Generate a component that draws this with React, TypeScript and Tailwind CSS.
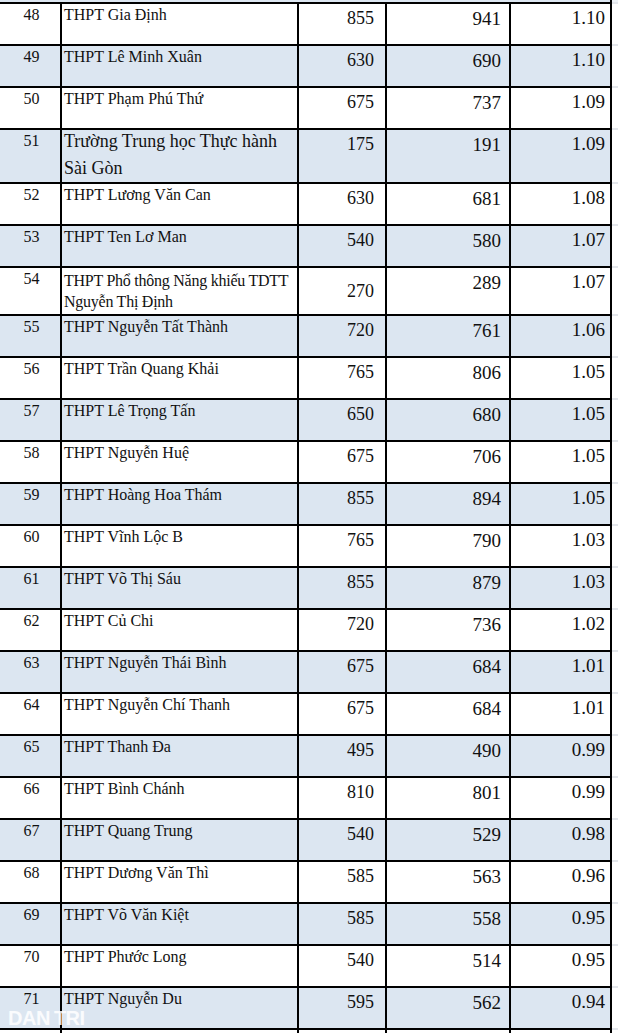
import React from "react";

type Row = {
  n: number;
  name: string;
  a: string;
  b: string;
  r: string;
  kind?: "tall" | "double";
};

const ROWS: Row[] = [
  { n: 48, name: "THPT Gia Định", a: "855", b: "941", r: "1.10" },
  { n: 49, name: "THPT Lê Minh Xuân", a: "630", b: "690", r: "1.10" },
  { n: 50, name: "THPT Phạm Phú Thứ", a: "675", b: "737", r: "1.09" },
  { n: 51, name: "Trường Trung học Thực hành Sài Gòn", a: "175", b: "191", r: "1.09", kind: "tall" },
  { n: 52, name: "THPT Lương Văn Can", a: "630", b: "681", r: "1.08" },
  { n: 53, name: "THPT Ten Lơ Man", a: "540", b: "580", r: "1.07" },
  { n: 54, name: "THPT Phổ thông Năng khiếu TDTT Nguyễn Thị Định", a: "270", b: "289", r: "1.07", kind: "double" },
  { n: 55, name: "THPT Nguyễn Tất Thành", a: "720", b: "761", r: "1.06" },
  { n: 56, name: "THPT Trần Quang Khải", a: "765", b: "806", r: "1.05" },
  { n: 57, name: "THPT Lê Trọng Tấn", a: "650", b: "680", r: "1.05" },
  { n: 58, name: "THPT Nguyễn Huệ", a: "675", b: "706", r: "1.05" },
  { n: 59, name: "THPT Hoàng Hoa Thám", a: "855", b: "894", r: "1.05" },
  { n: 60, name: "THPT Vĩnh Lộc B", a: "765", b: "790", r: "1.03" },
  { n: 61, name: "THPT Võ Thị Sáu", a: "855", b: "879", r: "1.03" },
  { n: 62, name: "THPT Củ Chi", a: "720", b: "736", r: "1.02" },
  { n: 63, name: "THPT Nguyễn Thái Bình", a: "675", b: "684", r: "1.01" },
  { n: 64, name: "THPT Nguyễn Chí Thanh", a: "675", b: "684", r: "1.01" },
  { n: 65, name: "THPT Thanh Đa", a: "495", b: "490", r: "0.99" },
  { n: 66, name: "THPT Bình Chánh", a: "810", b: "801", r: "0.99" },
  { n: 67, name: "THPT Quang Trung", a: "540", b: "529", r: "0.98" },
  { n: 68, name: "THPT Dương Văn Thì", a: "585", b: "563", r: "0.96" },
  { n: 69, name: "THPT Võ Văn Kiệt", a: "585", b: "558", r: "0.95" },
  { n: 70, name: "THPT Phước Long", a: "540", b: "514", r: "0.95" },
  { n: 71, name: "THPT Nguyễn Du", a: "595", b: "562", r: "0.94" },
];

const HEIGHT = {
  tall: "h-[54px]",
  double: "h-[48px]",
  normal: "h-[42px]",
};

function TableRow({ row }: { row: Row }) {
  const blue = row.n % 2 === 1;
  const h = HEIGHT[row.kind ?? "normal"];

  return (
    <div className={`flex ${h}`}>
      <div className={`flex w-[612px] border-t-2 border-black ${blue ? "bg-[#dce6f1]" : "bg-white"}`}>
        <div className="w-[62px] border-r-2 border-black pl-[3px] text-center text-[16px] leading-[22px]">
          {row.n}
        </div>
        <div className="w-[237px] border-r-2 border-black pl-[2px]">
          {row.kind === "tall" ? (
            <div className="-mt-[2px] text-[18px] leading-[27px]">{row.name}</div>
          ) : row.kind === "double" ? (
            <div className="pt-[2px] text-[16px] leading-[21px] tracking-[-0.25px]">
              THPT Phổ thông Năng khiếu TDTT
              <br />
              Nguyễn Thị Định
            </div>
          ) : (
            <div className="text-[16px] leading-[22px]">{row.name}</div>
          )}
        </div>
        <div
          className={`w-[88px] border-r-2 border-black pr-[11px] text-right text-[18px] leading-[24px] ${
            row.kind === "double" ? "pt-[11px]" : "pt-[2px]"
          }`}
        >
          {row.a}
        </div>
        <div className="w-[124px] border-r-2 border-black pr-[8px] pt-[3px] text-right text-[19px] leading-[24px]">
          {row.b}
        </div>
        <div className="w-[101px] border-r-2 border-black pr-[5px] pt-[2px] text-right text-[19px] leading-[24px]">
          {row.r}
        </div>
      </div>
      <div className="flex-1 border-t-2 border-[#e3e6eb] bg-white" />
    </div>
  );
}

export default function App() {
  return (
    <div className="relative h-[1033px] w-[618px] overflow-hidden bg-white font-['Liberation_Serif','Times_New_Roman',serif] text-[#111]">
      {/* tail of the previous row (47) */}
      <div className="flex h-[2px]">
        <div className="w-[612px] border-r-2 border-black bg-[#dce6f1]" />
        <div className="flex-1 bg-[#eef2f7]" />
      </div>

      {ROWS.map((row) => (
        <TableRow key={row.n} row={row} />
      ))}

      {/* next row, cut off at the bottom */}
      <div className="flex h-[42px]">
        <div className="flex w-[612px] border-t-2 border-black bg-white">
          <div className="w-[62px] border-r-2 border-black" />
          <div className="w-[237px] border-r-2 border-black" />
          <div className="w-[88px] border-r-2 border-black" />
          <div className="w-[124px] border-r-2 border-black" />
          <div className="w-[101px] border-r-2 border-black" />
        </div>
        <div className="flex-1 border-t-2 border-[#e3e6eb] bg-white" />
      </div>

      <div className="absolute left-[8px] top-[1008px] font-['Liberation_Sans',Arial,sans-serif] text-[20px] font-bold leading-none tracking-[-0.5px] text-white/85 [word-spacing:-1px]">
        DAN TRI
      </div>
    </div>
  );
}
